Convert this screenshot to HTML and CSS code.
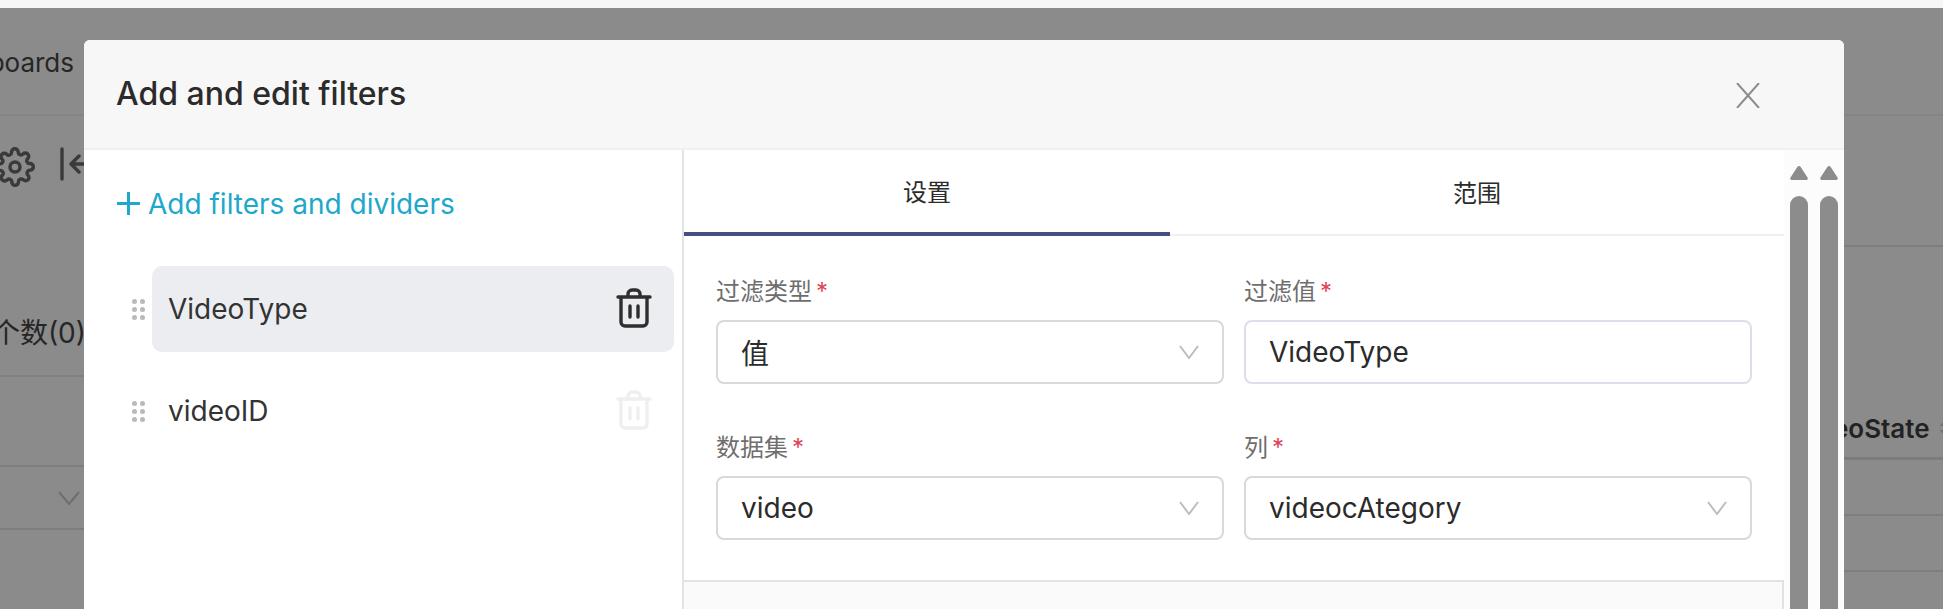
FILE: index.html

```html
<!DOCTYPE html>
<html lang="en">
<head>
  <meta charset="UTF-8" />
  <title>Add and edit filters</title>
  <link rel="stylesheet" href="styles.css">
</head>
<body>
  <div class="top-band"></div>
  <div class="page">
    <!-- dimmed dashboard behind the modal -->
    <div class="behind">
      <div class="behind-left">
        <div class="bl-row bl-title"><span>Dashboards</span></div>
        <div class="bl-row bl-tools">
          <svg class="gear" width="40" height="40" viewBox="0 0 24 24" fill="none" stroke="#3a3a3a" stroke-width="2.1" stroke-linejoin="round">
            <circle cx="12" cy="12" r="3"/>
            <path d="M19.4 15a1.65 1.65 0 0 0 .33 1.82l.06.06a2 2 0 1 1-2.83 2.83l-.06-.06a1.65 1.65 0 0 0-2.82 1.17V21a2 2 0 1 1-4 0v-.09a1.65 1.65 0 0 0-2.82-1.17l-.06.06a2 2 0 1 1-2.83-2.83l.06-.06a1.65 1.65 0 0 0-1.17-2.82H3a2 2 0 1 1 0-4h.09a1.65 1.65 0 0 0 1.17-2.82l-.06-.06a2 2 0 1 1 2.83-2.83l.06.06a1.65 1.65 0 0 0 2.82-1.17V3a2 2 0 1 1 4 0v.09a1.65 1.65 0 0 0 2.82 1.17l.06-.06a2 2 0 1 1 2.83 2.83l-.06.06a1.65 1.65 0 0 0 1.17 2.82H21a2 2 0 1 1 0 4h-.09a1.65 1.65 0 0 0-1.51 1.09z"/>
          </svg>
          <svg class="collapse" width="28" height="34" viewBox="0 0 28 34" fill="none" stroke="#3a3a3a" stroke-width="3.4" stroke-linecap="round" stroke-linejoin="round">
            <path d="M2 2v30M28 17H11M19 9l-8 8 8 8"/>
          </svg>
        </div>
        <div class="bl-row bl-count"><span>个数(0)</span></div>
        <div class="bl-row bl-blank"></div>
        <div class="bl-row bl-select">
          <svg width="22" height="14" viewBox="0 0 22 14" fill="none" stroke="#6e6e6e" stroke-width="2"><path d="M1 1l10 12L21 1"/></svg>
        </div>
      </div>
      <div class="behind-right">
        <div class="br-row br-one"></div>
        <div class="br-row br-two"></div>
        <div class="br-row br-head">
          <span>VideoState</span>
          <svg class="sort" width="14" height="24" viewBox="0 0 14 24" fill="#6f6f6f"><path d="M7 2l6 8H1zM7 22l-6-8h12z"/></svg>
        </div>
        <div class="br-row br-cell"></div>
        <div class="br-row br-cell"></div>
      </div>
    </div>

    <div class="modal">
      <div class="modal-head">
        <h2>Add and edit filters</h2>
        <svg class="close" width="24" height="25" viewBox="0 0 24 25" fill="none" stroke="#8c8c8c" stroke-width="2"><path d="M1 0l22 25M23 0L1 25"/></svg>
      </div>
      <div class="modal-body">
        <div class="side">
          <div class="add-link">
            <svg width="23" height="23" viewBox="0 0 23 23" fill="none" stroke="#20a7c9" stroke-width="3"><path d="M11.5 0v23M0 11.5h23"/></svg>
            <span>Add filters and dividers</span>
          </div>
          <div class="filter-row">
            <span class="dots"><i></i><i></i><i></i><i></i><i></i><i></i></span>
            <div class="filter-item active">
              <span>VideoType</span>
              <svg class="trash" width="36" height="40" viewBox="0 0 36 40" fill="none" stroke="#2e2e2e" stroke-width="3.4" stroke-linecap="round" stroke-linejoin="round">
                <path d="M2 9h32M12 9V6a4 4 0 0 1 4-4h4a4 4 0 0 1 4 4v3M5 9v25a4 4 0 0 0 4 4h18a4 4 0 0 0 4-4V9M14 18v11M22 18v11"/>
              </svg>
            </div>
          </div>
          <div class="filter-row">
            <span class="dots"><i></i><i></i><i></i><i></i><i></i><i></i></span>
            <div class="filter-item">
              <span>videoID</span>
              <svg class="trash" width="36" height="40" viewBox="0 0 36 40" fill="none" stroke="#efefef" stroke-width="3.4" stroke-linecap="round" stroke-linejoin="round">
                <path d="M2 9h32M12 9V6a4 4 0 0 1 4-4h4a4 4 0 0 1 4 4v3M5 9v25a4 4 0 0 0 4 4h18a4 4 0 0 0 4-4V9M14 18v11M22 18v11"/>
              </svg>
            </div>
          </div>
        </div>

        <div class="main">
          <div class="tabs">
            <div class="tab tab-active">设置</div>
            <div class="tab tab-wide">范围</div>
          </div>
          <div class="form">
            <div class="field">
              <div class="label">过滤类型<em>*</em></div>
              <div class="control">
                <span>值</span>
                <svg width="20" height="14" viewBox="0 0 20 14" fill="none" stroke="#bdbdbd" stroke-width="2"><path d="M1 1l9 12 9-12"/></svg>
              </div>
            </div>
            <div class="field">
              <div class="label">过滤值<em>*</em></div>
              <div class="control control-input"><span>VideoType</span></div>
            </div>
            <div class="field">
              <div class="label">数据集<em>*</em></div>
              <div class="control">
                <span>video</span>
                <svg width="20" height="14" viewBox="0 0 20 14" fill="none" stroke="#bdbdbd" stroke-width="2"><path d="M1 1l9 12 9-12"/></svg>
              </div>
            </div>
            <div class="field">
              <div class="label">列<em>*</em></div>
              <div class="control">
                <span>videocAtegory</span>
                <svg width="20" height="14" viewBox="0 0 20 14" fill="none" stroke="#bdbdbd" stroke-width="2"><path d="M1 1l9 12 9-12"/></svg>
              </div>
            </div>
          </div>
          <div class="panel"></div>
        </div>

        <div class="gutter">
          <div class="track">
            <svg width="18" height="14" viewBox="0 0 18 14" fill="#8c8c8c"><path d="M7.3 1a2 2 0 0 1 3.4 0l6.8 10.5A1.6 1.6 0 0 1 16 14H2a1.6 1.6 0 0 1-1.5-2.5z"/></svg>
            <div class="thumb"></div>
          </div>
          <div class="track">
            <svg width="18" height="14" viewBox="0 0 18 14" fill="#8c8c8c"><path d="M7.3 1a2 2 0 0 1 3.4 0l6.8 10.5A1.6 1.6 0 0 1 16 14H2a1.6 1.6 0 0 1-1.5-2.5z"/></svg>
            <div class="thumb"></div>
          </div>
        </div>
      </div>
    </div>
  </div>
</body>
</html>
```

FILE: styles.css

```css
* {
  box-sizing: border-box;
}
html, body {
  margin: 0;
  height: 609px;
  overflow: hidden;
}
body {
  font-family: Inter, "Noto Sans CJK SC", sans-serif;
  color: #2b2b2b;
  background: #f6f6f6;
}
.top-band {
  height: 8px;
}
.page {
  position: relative;
  height: 601px;
  overflow: hidden;
  background: #8b8b8b;
}

/* dashboard behind the overlay */
.behind {
  display: flex;
  justify-content: space-between;
  height: 100%;
}
.behind-left {
  width: 84px;
  overflow: hidden;
}
.behind-right {
  width: 99px;
  overflow: hidden;
}
.bl-row {
  display: flex;
  justify-content: flex-end;
  align-items: center;
  font-size: 26px;
  white-space: nowrap;
  color: #262626;
}
.bl-title {
  height: 108px;
  padding: 0 10px 0 0;
  border-bottom: 2px solid #858585;
}
.bl-title span {
  margin-top: 3px;
}
.bl-tools {
  height: 80px;
  justify-content: flex-start;
  align-items: flex-start;
  gap: 25px;
  padding-top: 31px;
  margin-left: -5px;
}
.gear, .collapse {
  flex: none;
}
.bl-count {
  height: 181px;
  align-items: flex-start;
  padding-top: 115px;
  font-size: 28px;
  border-bottom: 2px solid #828282;
}
.bl-count span {
  margin-right: -2px;
}
.bl-blank {
  height: 90px;
  border-bottom: 2px solid #7e7e7e;
}
.bl-select {
  height: 63px;
  padding-right: 4px;
  border-bottom: 2px solid #7e7e7e;
}
.br-row {
  display: flex;
  align-items: center;
  white-space: nowrap;
}
.br-one {
  height: 108px;
  border-bottom: 2px solid #858585;
}
.br-two {
  height: 131px;
  border-bottom: 2px solid #7e7e7e;
}
.br-head {
  height: 213px;
  align-items: flex-end;
  justify-content: flex-start;
  padding-bottom: 13px;
  border-bottom: 3px solid #7c7c7c;
  font-size: 26px;
  font-weight: 600;
  color: #222;
  overflow: hidden;
}
.br-head span {
  margin-left: -53px;
}
.sort {
  flex: none;
  margin: 0 0 4px 9px;
}
.br-cell {
  height: 56px;
  border-bottom: 2px solid #7e7e7e;
}

/* modal */
.modal {
  position: absolute;
  left: 84px;
  top: 32px;
  width: 1760px;
  height: 620px;
  background: #fff;
  border-radius: 6px 6px 0 0;
}
.modal-head {
  display: flex;
  align-items: center;
  justify-content: space-between;
  height: 110px;
  padding: 0 84px 2px 32px;
  background: #f7f7f7;
  border-bottom: 2px solid #f0f0f0;
  border-radius: 6px 6px 0 0;
}
.modal-head h2 {
  margin: 0;
  font-size: 32px;
  font-weight: 500;
  color: #2b2b2b;
}
.close {
  margin-top: 4px;
}
.modal-body {
  display: flex;
  height: 510px;
}

/* left column */
.side {
  width: 600px;
  flex: none;
  padding-top: 42px;
  border-right: 2px solid #e4e4e4;
}
.add-link {
  display: flex;
  align-items: center;
  gap: 8px;
  height: 23px;
  padding-left: 33px;
  font-size: 28px;
  color: #20a7c9;
  margin-bottom: 51px;
}
.filter-row {
  display: flex;
  align-items: center;
  height: 86px;
  padding-left: 48px;
  margin-bottom: 16px;
}
.dots {
  display: grid;
  grid-template-columns: 4px 4px;
  grid-auto-rows: 4px;
  gap: 4px 4px;
  width: 20px;
  flex: none;
}
.dots i {
  width: 5px;
  height: 5px;
  background: #bababa;
  border-radius: 50%;
}
.filter-item {
  display: flex;
  align-items: center;
  justify-content: space-between;
  width: 522px;
  height: 86px;
  padding: 0 22px 0 16px;
  border-radius: 10px;
  font-size: 28px;
  color: #333;
}
.filter-item.active {
  background: #ecedf1;
}
.trash {
  margin-top: -2px;
}

/* right column */
.main {
  width: 1100px;
  flex: none;
}
.tabs {
  display: flex;
  height: 86px;
  border-bottom: 2px solid #f0f0f0;
}
.tab {
  display: flex;
  align-items: center;
  justify-content: center;
  width: 486px;
  height: 86px;
  padding-bottom: 2px;
  font-size: 24px;
  color: #2b2b2b;
}
.tab-wide {
  width: 614px;
  padding-bottom: 4px;
}
.tab-active {
  border-bottom: 4px solid #454f85;
}
.form {
  display: grid;
  grid-template-columns: 508px 508px;
  align-content: start;
  column-gap: 20px;
  row-gap: 48px;
  height: 344px;
  padding: 40px 0 0 32px;
}
.label {
  height: 44px;
  font-size: 24px;
  line-height: 32px;
  color: #6e6e6e;
  white-space: nowrap;
}
.label em {
  margin-left: 4px;
  font-style: normal;
  color: #e04355;
}
.control {
  display: flex;
  align-items: center;
  justify-content: space-between;
  height: 64px;
  padding: 0 23px;
  border: 2px solid #d9d9d9;
  border-radius: 8px;
  font-size: 28px;
  color: #2b2b2b;
}
.control-input {
  border-color: #dcdfe8;
}
.panel {
  height: 80px;
  background: #fafafa;
  border-top: 2px solid #e2e2e2;
  border-right: 2px solid #e2e2e2;
}

/* the two scrollbars */
.gutter {
  display: flex;
  gap: 12px;
  width: 59px;
  flex: none;
  padding: 16px 0 0 6px;
  background: #fcfcfc;
}
.track {
  display: flex;
  flex-direction: column;
  gap: 16px;
  width: 18px;
}
.track svg {
  display: block;
  flex: none;
}
.thumb {
  width: 18px;
  flex: 1;
  background: #8c8c8c;
  border-radius: 9px 9px 0 0;
}
```
